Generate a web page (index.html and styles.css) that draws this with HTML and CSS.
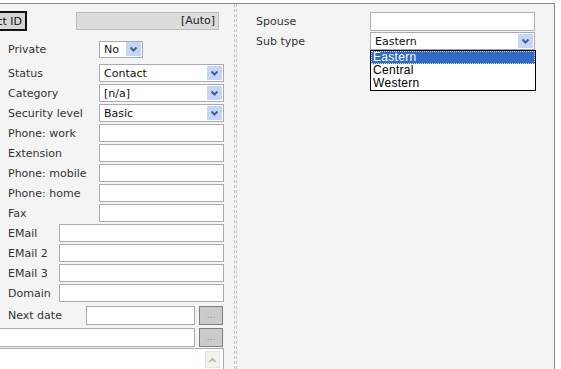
FILE: index.html
```html
<!DOCTYPE html>
<html lang="en">
<head>
    <meta charset="UTF-8">
    <meta name="viewport" content="width=device-width, initial-scale=1.0">
    <title>Contact</title>
    <link rel="stylesheet" href="styles.css">
</head>
<body>

<div class="panel">
    <!-- Left column: contact details -->
    <div class="col-left">
        <div class="row row-id">
            <div class="id-wrap"><button class="id-btn" type="button">Contact ID</button></div>
            <div class="auto-field">[Auto]</div>
        </div>

        <div class="row row-private">
            <span class="label">Private</span>
            <div class="select select-small"><span class="select-text">No</span><span class="arrow"><svg viewBox="0 0 15 14" width="15" height="14"><path d="M4.5 5.5 L7.5 8.5 L10.5 5.5" fill="none" stroke="#4a5d8e" stroke-width="2"/></svg></span></div>
        </div>
        <div class="row row-status">
            <span class="label">Status</span>
            <div class="select"><span class="select-text">Contact</span><span class="arrow"><svg viewBox="0 0 15 14" width="15" height="14"><path d="M4.5 5.5 L7.5 8.5 L10.5 5.5" fill="none" stroke="#4a5d8e" stroke-width="2"/></svg></span></div>
        </div>
        <div class="row">
            <span class="label">Category</span>
            <div class="select"><span class="select-text">[n/a]</span><span class="arrow"><svg viewBox="0 0 15 14" width="15" height="14"><path d="M4.5 5.5 L7.5 8.5 L10.5 5.5" fill="none" stroke="#4a5d8e" stroke-width="2"/></svg></span></div>
        </div>
        <div class="row">
            <span class="label">Security level</span>
            <div class="select"><span class="select-text">Basic</span><span class="arrow"><svg viewBox="0 0 15 14" width="15" height="14"><path d="M4.5 5.5 L7.5 8.5 L10.5 5.5" fill="none" stroke="#4a5d8e" stroke-width="2"/></svg></span></div>
        </div>
        <div class="row">
            <span class="label">Phone: work</span>
            <div class="input"></div>
        </div>
        <div class="row">
            <span class="label">Extension</span>
            <div class="input"></div>
        </div>
        <div class="row">
            <span class="label">Phone: mobile</span>
            <div class="input"></div>
        </div>
        <div class="row">
            <span class="label">Phone: home</span>
            <div class="input"></div>
        </div>
        <div class="row">
            <span class="label">Fax</span>
            <div class="input"></div>
        </div>
        <div class="row">
            <span class="label label-short">EMail</span>
            <div class="input input-wide"></div>
        </div>
        <div class="row">
            <span class="label label-short">EMail 2</span>
            <div class="input input-wide"></div>
        </div>
        <div class="row">
            <span class="label label-short">EMail 3</span>
            <div class="input input-wide"></div>
        </div>
        <div class="row">
            <span class="label label-short">Domain</span>
            <div class="input input-wide"></div>
        </div>

        <div class="row row-date">
            <span class="label label-date">Next date</span>
            <div class="input input-date"></div>
            <button class="dots-btn" type="button">...</button>
        </div>
        <div class="row row-extra">
            <div class="input input-extra"></div>
            <button class="dots-btn" type="button">...</button>
        </div>

        <div class="memo">
            <div class="memo-body"></div>
            <div class="scrollbar">
                <div class="scroll-up"><svg viewBox="0 0 15 17" width="15" height="17"><path d="M4 10 L7.5 6.5 L11 10" fill="none" stroke="#b8bcae" stroke-width="2"/></svg></div>
            </div>
        </div>
    </div>

    <div class="divider"></div>

    <!-- Right column -->
    <div class="col-right">
        <div class="row row-spouse">
            <span class="label label-right">Spouse</span>
            <div class="input input-right"></div>
        </div>
        <div class="row row-subtype">
            <span class="label label-right">Sub type</span>
            <div class="select select-right">
                <span class="select-text">Eastern</span><span class="arrow"><svg viewBox="0 0 15 14" width="15" height="14"><path d="M4.5 5.5 L7.5 8.5 L10.5 5.5" fill="none" stroke="#4a5d8e" stroke-width="2"/></svg></span>
                <ul class="dropdown">
                    <li class="selected">Eastern</li>
                    <li>Central</li>
                    <li>Western</li>
                </ul>
            </div>
        </div>
    </div>
</div>

</body>
</html>
```

FILE: styles.css
```css
body {
    margin: 0;
    padding: 0;
    background-color: #ffffff;
    font-family: "DejaVu Sans", Verdana, sans-serif;
    font-size: 11px;
    color: #333;
    overflow: hidden;
}

.panel {
    margin-top: 3px;
    width: 555px;
    height: 366px;
    box-sizing: border-box;
    border-top: 1px solid #8a8a8a;
    border-right: 1px solid #8a8a8a;
    background-color: #f4f4f4;
    display: flex;
}

.col-left {
    width: 234px;
    flex-shrink: 0;
    overflow: hidden;
    display: flex;
    flex-direction: column;
    padding-top: 7px;
    box-sizing: border-box;
}

.divider {
    width: 1px;
    flex-shrink: 0;
    border-left: 1px dashed #c2c2c2;
    border-right: 1px dashed #c2c2c2;
}

.col-right {
    flex: 1;
    position: relative;
    padding-top: 4px;
}

.row {
    display: flex;
    align-items: center;
    height: 18px;
    margin-top: 2px;
    flex-shrink: 0;
}

.label {
    width: 91px;
    padding-left: 8px;
    flex-shrink: 0;
    white-space: nowrap;
}

.label-short {
    width: 51px;
}

.label-date {
    width: 78px;
}

/* ID row */
.row-id {
    height: 20px;
    margin-top: 0;
}

.id-wrap {
    width: 27px;
    display: flex;
    justify-content: flex-end;
    flex-shrink: 0;
}

.id-btn {
    flex-shrink: 0;
    height: 20px;
    padding: 0 3px 0 4px;
    border: 2px solid #111;
    background-color: #d6d6d6;
    font-family: "DejaVu Sans", Verdana, sans-serif;
    font-size: 11px;
    color: #111;
}

.auto-field {
    margin-left: 49px;
    width: 143px;
    height: 18px;
    box-sizing: border-box;
    border: 1px solid #bdbdbd;
    background-color: #dcdcdc;
    text-align: right;
    padding-right: 3px;
    line-height: 16px;
    color: #222;
}

.row-private {
    margin-top: 9px;
}

.row-status {
    margin-top: 6px;
}

/* Fake select boxes */
.select {
    width: 125px;
    height: 18px;
    box-sizing: border-box;
    border: 1px solid #a7acb4;
    background-color: #fff;
    display: flex;
    align-items: center;
    padding: 1px;
    color: #111;
}

.select-small {
    width: 44px;
    height: 17px;
}

.select-text {
    flex: 1;
    padding-left: 3px;
}

.arrow {
    width: 15px;
    height: 14px;
    display: flex;
    background-color: #c5d5f7;
    border-radius: 1px;
}

.input {
    width: 125px;
    height: 18px;
    box-sizing: border-box;
    border: 1px solid #ababab;
    background-color: #fff;
}

.input-wide {
    width: 165px;
}

.row-date {
    margin-top: 4px;
    height: 19px;
}

.input-date {
    width: 109px;
    height: 19px;
}

.row-extra {
    margin-top: 3px;
    height: 19px;
}

.input-extra {
    width: 215px;
    height: 19px;
    margin-left: -20px;
}

.dots-btn {
    margin-left: 4px;
    width: 24px;
    height: 19px;
    padding: 0;
    border: 1px solid #7f7f7f;
    background-color: #cbcbcb;
    color: #8a8a8a;
    font-family: "DejaVu Sans", Verdana, sans-serif;
    font-size: 9px;
    line-height: 15px;
}

.memo {
    margin-top: 1px;
    margin-left: -20px;
    width: 244px;
    height: 40px;
    flex-shrink: 0;
    box-sizing: border-box;
    border: 1px solid #ababab;
    background-color: #fff;
    display: flex;
}

.memo-body {
    flex: 1;
}

.scrollbar {
    width: 17px;
    padding: 2px 1px 0 0;
    background-color: #fcfcfa;
}

.scroll-up {
    width: 15px;
    height: 17px;
    display: flex;
    background-color: #f1f2ec;
    border: 1px solid #e6e8df;
    box-sizing: border-box;
}

/* Right column */
.row-spouse {
    margin-top: 4px;
    height: 19px;
}

.label-right {
    width: 114px;
    padding-left: 19px;
}

.input-right {
    width: 165px;
    height: 19px;
    border-color: #b4b4b4;
}

.row-subtype {
    margin-top: 1px;
}

.select-right {
    width: 165px;
    position: relative;
}

.dropdown {
    position: absolute;
    top: 17px;
    left: -1px;
    width: 166px;
    margin: 0;
    padding: 0;
    list-style: none;
    box-sizing: border-box;
    border: 1px solid #000;
    background-color: #fff;
    font-family: "Liberation Sans", Arial, sans-serif;
    font-size: 12px;
    letter-spacing: 0.3px;
    color: #000;
}

.dropdown li {
    height: 13px;
    line-height: 13px;
    padding-left: 2px;
}

.dropdown li.selected {
    background-color: #316ac5;
    color: #fff;
    outline: 1px dotted #c9d8f0;
    outline-offset: -1px;
}
```
